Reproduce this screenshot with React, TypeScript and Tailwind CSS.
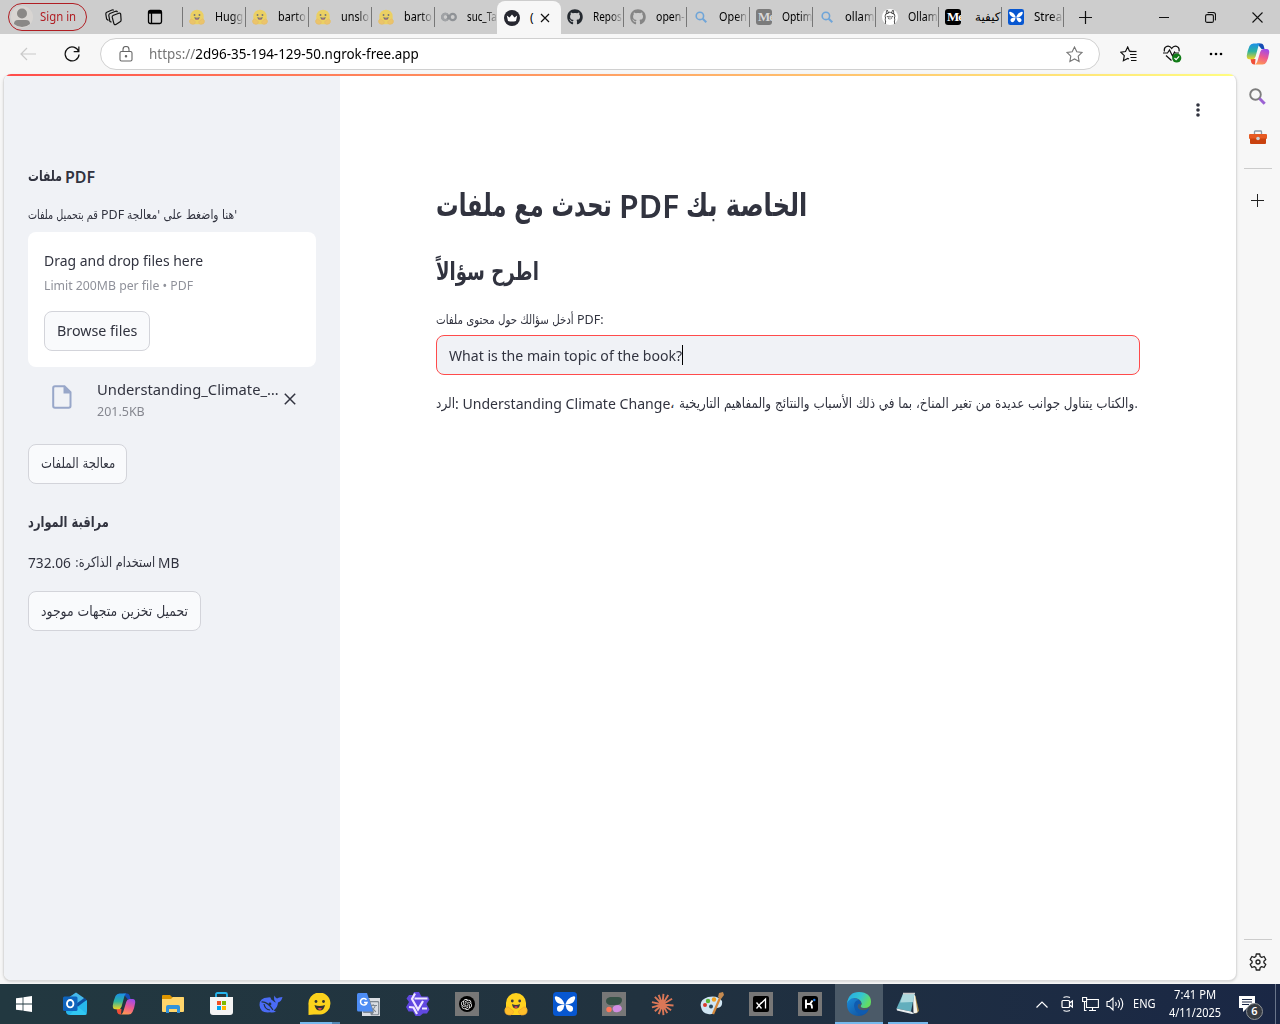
import { useLayoutEffect, useRef, type ReactNode } from "react";
import { FaGithub } from "react-icons/fa";
import { SiOllama, SiOpenai } from "react-icons/si";
import { MdGTranslate } from "react-icons/md";

/* Stretches its text horizontally so that it fills the width set by its class. */
function Fit({ className, children }: { className: string; children: ReactNode }) {
  const outer = useRef<HTMLSpanElement>(null);
  const inner = useRef<HTMLSpanElement>(null);
  useLayoutEffect(() => {
    const apply = () => {
      if (!outer.current || !inner.current) return;
      const natural = inner.current.offsetWidth;
      if (natural) inner.current.style.transform = `scaleX(${outer.current.clientWidth / natural})`;
    };
    apply();
    document.fonts?.ready.then(apply);
  }, []);
  return (
    <span ref={outer} className={`block shrink-0 whitespace-nowrap ${className}`}>
      <span ref={inner} className="inline-block origin-left">{children}</span>
    </span>
  );
}

function Hug({ size = 16 }: { size?: number }) {
  return (
    <svg width={size} height={size} viewBox="0 0 24 24">
      <path d="M12 1a10 10 0 0 1 10 10v4q2 2 1 4.500-1 2-4 3.500H5q-3-1.500-4-3.500Q0 17 2 15v-4A10 10 0 0 1 12 1z" fill="#ffd21e" />
      <path d="M2.500 15.500q1.500-1.500 3 .5l4 3q.5 3-3 4-5 0-5.500-3-.5-2.500 1.500-4.500zM21.500 15.500q-1.500-1.500-3 .5l-4 3q-.5 3 3 4 5 0 5.500-3 .5-2.500-1.500-4.500z" fill="#ffbf2a" stroke="#f0a52c" strokeWidth=".7" />
      <circle cx="8.300" cy="9" r="1.400" fill="#3a3b45" />
      <circle cx="15.700" cy="9" r="1.400" fill="#3a3b45" />
      <path d="M8 12q4 2.200 8 0q-.5 4.500-4 4.500T8 12z" fill="#3a3b45" />
      <path d="M10 15q2-1.500 4 0q-2 2-4 0z" fill="#f5414f" />
    </svg>
  );
}

function Colab() {
  return (
    <svg width="16" height="16" viewBox="0 0 16 16" fill="none" strokeWidth="2.300">
      <circle cx="4.300" cy="8" r="3.100" stroke="#8f9296" />
      <circle cx="11.700" cy="8" r="3.100" stroke="#8f9296" />
      <path d="M6.500 5.800A3.100 3.100 0 1 0 6.500 10.200" stroke="#a1a3a6" />
    </svg>
  );
}

function Crown() {
  return (
    <svg width="16" height="16" viewBox="0 0 16 16">
      <circle cx="8" cy="8" r="8" fill="#262730" />
      <path d="M2.800 5.500l2.700 2L8 4.400l2.500 3.100 2.700-2-1.200 5.600q-4 1-8 0z" fill="#fff" />
    </svg>
  );
}

function BlueSearch() {
  return (
    <svg width="16" height="16" viewBox="0 0 16 16" fill="none" stroke="#6fa5d8" strokeWidth="1.600">
      <circle cx="6.900" cy="6.900" r="3.700" />
      <path d="M9.700 9.700l3.600 3.600" strokeWidth="2" />
    </svg>
  );
}

function Medium({ dim }: { dim?: boolean }) {
  return (
    <span className={`flex h-4 w-4 items-center overflow-hidden rounded-[3px] pl-[2px] font-['Liberation_Serif'] text-[13px] font-bold leading-4 tracking-[-1px] ${dim ? "bg-[#7b7b7b] text-[#d8d8d8]" : "bg-black text-white"}`}>
      Me
    </span>
  );
}

function Butterfly({ size = 16 }: { size?: number }) {
  return (
    <svg width={size} height={size} viewBox="0 0 24 24">
      <rect width="24" height="24" rx="3.500" fill="#0757d1" />
      <g fill="#fff">
        <path d="M11.700 12.500Q9.500 5.500 3.300 4.300 1.500 4.100 1.800 6q.7 4 4.200 5.600 2.500 1 5.700.9zM12.300 12.500Q14.500 5.500 20.700 4.300q1.800-.2 1.500 1.700-.7 4-4.200 5.600-2.500 1-5.700.9z" />
        <path d="M11.500 12.800q-4.500-.3-6.700 1.500-1.800 2-.6 4.200 1.900 2.200 4.300.6 2.400-1.800 3-6.300zM12.500 12.800q4.500-.3 6.700 1.500 1.800 2 .6 4.200-1.900 2.200-4.300.6-2.400-1.800-3-6.300z" />
      </g>
    </svg>
  );
}

function OllamaTab() {
  return (
    <span className="flex h-4 w-4 items-center justify-center rounded-full bg-white text-[#333]">
      <SiOllama size={14} />
    </span>
  );
}

function Copilot({ size = 24 }: { size?: number }) {
  return (
    <svg width={size} height={size} viewBox="0 0 24 24">
      <defs>
        <linearGradient id="cpA" x1="0" y1="0" x2="0" y2="1">
          <stop offset="0" stopColor="#1b8fe8" /><stop offset=".5" stopColor="#2db3a0" /><stop offset="1" stopColor="#f0d321" />
        </linearGradient>
        <linearGradient id="cpB" x1=".6" y1="0" x2=".3" y2="1">
          <stop offset="0" stopColor="#a14be8" /><stop offset=".5" stopColor="#ee5a90" /><stop offset="1" stopColor="#ff9850" />
        </linearGradient>
      </defs>
      <path d="M11 1.500h4q2 0 2.600 2L18.500 7h-3z" fill="#154db5" />
      <path d="M9 22.500h-1q-2 0-2.700-2L4.500 17h5z" fill="#ef4e38" />
      <path d="M7.500 1.500h6.800q-1.500 1-2 3L9.600 14.500q-.8 2.700-3.300 2.700H3.200Q.5 17 .8 13.500q.7-5 2.700-9.500 1.300-2.500 4-2.500z" fill="url(#cpA)" />
      <path d="M16.500 22.500H9q1.800-1 2.300-3l3-9.800Q15 7 17.500 7h3.300q2.700.2 2.400 3.700-.7 5-2.700 9.300-1.300 2.500-4 2.500z" fill="url(#cpB)" />
    </svg>
  );
}

const fade = "[mask-image:linear-gradient(to_right,black_60%,transparent_105%)]";

const tabs: { icon: ReactNode; label: string; width: string; active?: boolean; dim?: boolean }[] = [
  { icon: <Hug />, label: "Hugg", width: `w-7 ${fade}`, dim: true },
  { icon: <Hug />, label: "barto", width: `w-7 ${fade}`, dim: true },
  { icon: <Hug />, label: "unslo", width: `w-7 ${fade}`, dim: true },
  { icon: <Hug />, label: "barto", width: `w-7 ${fade}`, dim: true },
  { icon: <Colab />, label: "suc_Ta", width: `w-[30px] ${fade}` },
  { icon: <Crown />, label: "(", width: "w-1", active: true },
  { icon: <FaGithub size={16} color="#24292f" />, label: "Repos", width: `w-[29px] ${fade}` },
  { icon: <FaGithub size={16} color="#858585" />, label: "open-", width: `w-[29px] ${fade}` },
  { icon: <BlueSearch />, label: "Open", width: `w-7 ${fade}` },
  { icon: <Medium dim />, label: "Optim", width: `w-[30px] ${fade}` },
  { icon: <BlueSearch />, label: "ollam", width: `w-[29px] ${fade}` },
  { icon: <OllamaTab />, label: "Ollam", width: `w-[30px] ${fade}` },
  { icon: <Medium />, label: "كيفية", width: "ml-1 w-[25px]" },
  { icon: <Butterfly />, label: "Strea", width: `w-7 ${fade}` },
];

function TabStrip() {
  return (
    <div className="flex h-[34px] items-center bg-[#cdcdcd] text-[12px] text-black">
      <div className="ml-2 flex h-7 w-[79px] items-center rounded-full border border-[#b01e23] pl-[2px]">
        <svg width="22" height="22" viewBox="0 0 22 22">
          <circle cx="11" cy="11" r="11" fill="#d8d5d2" />
          <circle cx="11" cy="7.500" r="5" fill="#8a8886" />
          <path d="M3 18q0-4 4-4h8q4 0 4 4-3.500 3-8 3t-8-3z" fill="#8a8886" />
        </svg>
        <Fit className="ml-[7px] w-9 text-[#b01e23]">Sign in</Fit>
      </div>
      <svg className="ml-[18px]" width="17" height="17" viewBox="0 0 17 17" fill="none" stroke="#111" strokeWidth="1.200" strokeLinejoin="round">
        <path d="M8.500 6.200l5.300-2q1.700-.4 1.900 1.100l.4 5.700q0 1.300-1 1.800l-4.200 2.700q-1.600.7-2-.8L7.200 8.200q-.2-1.400 1.300-2z" />
        <path d="M6.500 13.200l-1.600-.8L3.800 6.500q0-1.500 1.200-2l5.500-2.200q1.500-.4 2 .9M3.500 11.500L1.600 10 .8 5q0-1.400 1-1.800L7 1q1.200-.3 1.700.3" />
      </svg>
      <svg className="ml-[25px]" width="16" height="16" viewBox="0 0 16 16" fill="none" stroke="#000" strokeWidth="1.300">
        <rect x="1.500" y="1.500" width="13" height="13" rx="1.800" />
        <path d="M1.500 3.200h13" strokeWidth="3" />
        <path d="M4.500 4v10" />
      </svg>
      <div className="ml-[19px] flex h-full items-center">
        {tabs.map((t, i) =>
          t.active ? (
            <div key={i} className="mt-[1px] flex h-[33px] w-[64px] items-center rounded-t-lg bg-[#f7f7f7] pl-[7px]">
              {t.icon}
              <Fit className="ml-[10px] w-1">{t.label}</Fit>
              <svg className="ml-[6px]" width="10" height="10" viewBox="0 0 10 10" stroke="#111" strokeWidth="1.200"><path d="M1 1l8 8M9 1L1 9" /></svg>
            </div>
          ) : (
            <div key={i} className={`flex h-[20px] items-center pl-[6px] ${i === 6 ? "w-[62px]" : "w-[63px] border-l border-[#777]"} ${i === 13 ? "border-r" : ""}`}>
              <span className={`shrink-0 ${t.dim ? "opacity-60" : ""}`}>{t.icon}</span>
              <span className="ml-[10px]"><Fit className={t.width}>{t.label}</Fit></span>
            </div>
          ),
        )}
      </div>
      <svg className="ml-[14px]" width="15" height="15" viewBox="0 0 15 15" stroke="#111" strokeWidth="1.200"><path d="M7.500 1v13M1 7.500h13" /></svg>
      <div className="ml-auto flex items-center pr-[17px]">
        <svg width="10" height="10" viewBox="0 0 10 10" stroke="#111"><path d="M0 5.500h10" /></svg>
        <svg className="ml-[36px]" width="11" height="11" viewBox="0 0 11 11" fill="none" stroke="#111" strokeWidth="1.100">
          <rect x=".6" y="2.600" width="7.800" height="7.800" rx="1.500" />
          <path d="M2.700 1q.3-.5 1-.5h4.500q2.300 0 2.300 2.300v4.500q0 .7-.6 1" />
        </svg>
        <svg className="ml-[36px]" width="11" height="11" viewBox="0 0 11 11" stroke="#111" strokeWidth="1.100"><path d="M.5.500l10 10M10.500.500l-10 10" /></svg>
      </div>
    </div>
  );
}

const star = "M8.500 1l2.300 4.800 5.200.7-3.800 3.700.9 5.300-4.600-2.500-4.600 2.500.9-5.300L1 6.500l5.200-.7z";

function Toolbar() {
  return (
    <div className="flex h-10 items-center bg-[#f7f7f7]">
      <svg className="ml-5" width="16" height="14" viewBox="0 0 16 14" fill="none" stroke="#c9c9c9" strokeWidth="1.200"><path d="M16 7H1M7 1L1 7l6 6" /></svg>
      <svg className="ml-7 mt-[-1px]" width="16" height="17" viewBox="0 0 17 17" fill="none" stroke="#111" strokeWidth="1.300"><path d="M15.600 6.500a7.400 7.400 0 1 0 .4 3M15.800 1v5.500h-5.500" /></svg>
      <div className="ml-5 flex h-8 w-[1000px] items-center rounded-full border border-[#d0d0d0] bg-white px-[18px] text-[13.500px]">
        <svg width="14" height="16" viewBox="0 0 14 16" fill="none" stroke="#666" strokeWidth="1.100">
          <rect x="1" y="5.500" width="12" height="9.500" rx="1.500" />
          <path d="M4 5.500V3.500a3 3 0 0 1 6 0v2" />
          <circle cx="7" cy="10.300" r=".7" fill="#666" />
        </svg>
        <Fit className="ml-4 w-[270px] text-black"><span className="text-[#767676]">https://</span>2d96-35-194-129-50.ngrok-free.app</Fit>
        <svg className="ml-auto mr-[-2px]" width="17" height="17" viewBox="0 0 17 17" fill="none" stroke="#777" strokeWidth="1.100"><path d={star} /></svg>
      </div>
      <svg className="ml-5" width="17" height="16" viewBox="0 0 17 16" fill="none" stroke="#111" strokeWidth="1.200">
        <path d="M12 5.500L9.500 5.200 7.700 1 5.500 5.500.8 6.200l3.500 3.500-.9 5 4.300-2.300 1.300.6M10 8.500h6.500M10.500 11.500h6M11 14.500h5.500" />
        <path d="M10 5.500h6.500" />
      </svg>
      <svg className="ml-[26px]" width="19" height="18" viewBox="0 0 19 18" fill="none" stroke="#111" strokeWidth="1.200">
        <path d="M1.500 6.500Q.5 2.500 4 1.300 6.800.5 8.700 3.500 10.600.5 13.500 1.300q3.300 1.200 2.500 5M0 8h4.500l2-3 3 6 2-4 .8 1H16M3 10.500l5.500 5" />
        <circle cx="13.700" cy="13" r="4.600" fill="#117b17" stroke="none" />
        <path d="M11.500 13l1.600 1.600 3-3.200" stroke="#fff" />
      </svg>
      <svg className="ml-[27px]" width="14" height="4" viewBox="0 0 14 4"><circle cx="2" cy="2" r="1.300" /><circle cx="7" cy="2" r="1.300" /><circle cx="12" cy="2" r="1.300" /></svg>
      <span className="ml-[23px]"><Copilot /></span>
    </div>
  );
}

const ar = "font-['DejaVu_Sans']";

function Sidebar() {
  return (
    <aside className="w-[336px] shrink-0 bg-[#f0f2f6] px-6 pt-[91px] text-[15px] text-[#31333f]">
      <div className="flex h-6 items-center font-semibold">
        <Fit className={`-mt-[2px] w-[34px] text-[15px] font-bold ${ar}`}>ملفات</Fit>
        <Fit className="ml-[3px] w-[30px] text-[16px]">PDF</Fit>
      </div>
      <div className="mt-4 flex h-5 items-center text-[13px]">
        <Fit className={`w-[70px] text-[12.500px] ${ar}`}>قم بتحميل ملفات</Fit>
        <Fit className="ml-[3px] w-[23px]">PDF</Fit>
        <Fit className={`ml-[3px] w-[110px] text-[12.500px] ${ar}`}>هنا واضغط على 'معالجة'</Fit>
      </div>
      <div className="mt-[7px] h-[135px] w-[288px] rounded-lg bg-white px-4 pt-4">
        <Fit className="h-6 w-[159px] leading-6">Drag and drop files here</Fit>
        <Fit className="mt-[3px] h-5 w-[149px] text-[13px] leading-5 text-[#8f919a]">Limit 200MB per file • PDF</Fit>
        <button className="mt-4 flex h-10 w-[106px] items-center rounded-lg border border-[#d3d4da] bg-[#f9fafc] pl-3">
          <Fit className="-mt-[2px] w-20">Browse files</Fit>
        </button>
      </div>
      <div className="flex h-[77px] pl-6">
        <svg className="mt-[18px]" width="20" height="24" viewBox="0 0 20 24">
          <path d="M3 1.200h9.500l6 6V21q0 1.800-1.800 1.800H3Q1.200 22.800 1.200 21V3Q1.200 1.200 3 1.200z" fill="none" stroke="#98a7c9" strokeWidth="2" />
          <path d="M11.500 1v7.500H19z" fill="#98a7c9" />
        </svg>
        <div className="ml-[25px] pt-[10px]">
          <Fit className="h-6 w-[182px] leading-6">Understanding_Climate_…</Fit>
          <Fit className="h-5 w-[48px] text-[13px] leading-5 text-[#85878f]">201.5KB</Fit>
        </div>
        <svg className="ml-[5px] mt-[26px]" width="12" height="12" viewBox="0 0 12 12" stroke="#31333f" strokeWidth="1.500"><path d="M.8.800l10.400 10.400M11.200.800L.8 11.200" /></svg>
      </div>
      <button className="flex h-10 w-[99px] items-center rounded-lg border border-[#d3d4da] bg-[#f9fafc] pl-3">
        <Fit className={`-mt-[2px] w-[74px] text-[14px] ${ar}`}>معالجة الملفات</Fit>
      </button>
      <div className="mt-[26px] flex h-6 items-center">
        <Fit className={`w-[81px] text-[15px] font-bold ${ar}`}>مراقبة الموارد</Fit>
      </div>
      <div className="mt-[17px] flex h-6 items-center">
        <Fit className="-mt-[2px] w-[43px]">732.06</Fit>
        <Fit className={`-mt-[2px] ml-[4px] w-[80px] text-[14px] ${ar}`}><span dir="rtl">استخدام الذاكرة:</span></Fit>
        <Fit className="-mt-[2px] ml-[3px] w-[21px]">MB</Fit>
      </div>
      <button className="mt-4 flex h-10 w-[173px] items-center rounded-lg border border-[#d3d4da] bg-[#f9fafc] pl-3">
        <Fit className={`w-[147px] text-[14px] ${ar}`}>تحميل تخزين متجهات موجود</Fit>
      </button>
    </aside>
  );
}

function Main() {
  return (
    <main className="flex-1 pl-24 text-[15px] text-[#31333f]">
      <div className="flex h-[72px] items-center justify-end pr-[36px]">
        <svg width="4" height="14" viewBox="0 0 4 14" fill="#31333f"><circle cx="2" cy="2" r="1.800" /><circle cx="2" cy="7" r="1.800" /><circle cx="2" cy="12" r="1.800" /></svg>
      </div>
      <h1 className="mt-10 flex h-[42px] items-center font-bold">
        <Fit className={`-mt-1 w-[176px] text-[32px] ${ar}`}>تحدث مع ملفات</Fit>
        <Fit className="-mt-[2px] ml-[7px] w-[60px] text-[33px] font-semibold">PDF</Fit>
        <Fit className={`-mt-1 ml-[7px] w-[121px] text-[32px] ${ar}`}>الخاصة بك</Fit>
      </h1>
      <h2 className="mt-7 flex h-8 items-center font-bold">
        <Fit className={`w-[103px] text-[25px] ${ar}`}>اطرح سؤالاً</Fit>
      </h2>
      <div className="mt-[22px] flex h-5 items-center text-[13px]">
        <Fit className={`w-[138px] text-[12.500px] ${ar}`}>أدخل سؤالك حول محتوى ملفات</Fit>
        <Fit className="ml-[3px] w-[27px]">PDF:</Fit>
      </div>
      <div className="mt-[5px] flex h-10 w-[704px] items-center rounded-lg border border-[#ff4b4b] bg-[#f0f2f6] pl-3">
        <Fit className="w-[233px]">What is the main topic of the book?</Fit>
        <span className="h-5 w-px bg-black" />
      </div>
      <div className="mt-4 flex h-6 items-center">
        <Fit className={`w-[19px] text-[14px] ${ar}`}>الرد</Fit>
        <Fit className="w-[215px]">: Understanding Climate Change</Fit>
        <Fit className={`w-[5px] text-[14px] ${ar}`}>،</Fit>
        <Fit className={`ml-[4px] w-[459px] text-[14px] ${ar}`}>والكتاب يتناول جوانب عديدة من تغير المناخ، بما في ذلك الأسباب والنتائج والمفاهيم التاريخية.</Fit>
      </div>
    </main>
  );
}

function EdgeRail() {
  return (
    <div className="flex w-[43px] shrink-0 flex-col items-center pr-[2px]">
      <svg className="mt-[14px]" width="17" height="17" viewBox="0 0 17 17" fill="none">
        <circle cx="6.500" cy="6.500" r="5.300" stroke="#7d7d7d" strokeWidth="1.900" />
        <path d="M10.500 10.500l5.200 5.200" stroke="#9b62d3" strokeWidth="3" />
      </svg>
      <svg className="mt-[25px]" width="18" height="15" viewBox="0 0 18 15">
        <path d="M5.500 4V1.800q0-.8.800-.8h5.400q.8 0 .8.800V4" fill="none" stroke="#8b9aa5" strokeWidth="1.300" />
        <rect x="0" y="4" width="18" height="5" rx="1" fill="#e65a22" />
        <path d="M1 8.500h16V13q0 1-1 1H2q-1 0-1-1z" fill="#c9420f" />
        <circle cx="9" cy="8.500" r="1.800" fill="#c8d3da" />
      </svg>
      <div className="mt-[23px] h-px w-7 bg-[#ccc]" />
      <svg className="mt-[25px]" width="13" height="13" viewBox="0 0 13 13" stroke="#222"><path d="M6.500 0v13M0 6.500h13" /></svg>
      <div className="mt-auto h-px w-7 bg-[#ccc]" />
      <svg className="mb-[13px] mt-[13px]" width="18" height="18" viewBox="0 0 18 18" fill="none" stroke="#222" strokeWidth="1.300" strokeLinejoin="round">
        <path d="M7.300 1h3.400l.5 2.500 1.500.9 2.400-.9 1.700 3L14.900 8.200v1.600l1.900 1.700-1.700 3-2.400-.9-1.500.9-.5 2.500H7.300l-.5-2.500-1.500-.9-2.400.9-1.700-3 1.900-1.700V8.200L1.200 6.500l1.700-3 2.400.9 1.500-.9z" />
        <circle cx="9" cy="9" r="2" />
      </svg>
    </div>
  );
}

const Gray = ({ children }: { children: ReactNode }) => <span className="flex h-6 w-6 items-center justify-center bg-[#777]">{children}</span>;

const apps: { icon: ReactNode; state?: string }[] = [
  { icon: (
    <svg width="24" height="24" viewBox="0 0 24 24">
      <path d="M3 7L13 1l10 7v10q0 4-4 4H7q-4 0-4-4z" fill="#1270c9" />
      <path d="M5 6l8-5.500L21 6l-8 6z" fill="#46b8ea" /><path d="M12 14l12-6v11q0 4-3 4H7q-4 0-4-4z" fill="#27b7ed" /><path d="M13 12l9-6 1.500 2L13 16z" fill="#0e4f9f" /><path d="M14 14l10 8q-1 1-3 1H7z" fill="#31c8f3" />
      <rect x="0" y="4.500" width="14.500" height="14.500" rx="1.500" fill="#0f64bd" /><ellipse cx="7.200" cy="11.700" rx="3.200" ry="3.700" fill="none" stroke="#fff" strokeWidth="1.900" />
    </svg>) },
  { icon: <Copilot /> },
  { icon: (
    <svg width="22" height="20" viewBox="0 0 22 20">
      <path d="M0 2q0-1 1-1h7l2 2h11q1 0 1 1v3H0z" fill="#dd9500" /><path d="M0 5h9l2-2h10q1 0 1 1v13q0 1-1 1H1q-1 0-1-1z" fill="#ffd56b" />
      <path d="M4 19v-6q0-2 2-2h10q2 0 2 2v6h-3v-4H7v4z" fill="#3293db" />
    </svg>) },
  { icon: (
    <svg width="23" height="24" viewBox="0 0 23 24">
      <path d="M6 5V2.500Q6 1 7.500 1h8Q17 1 17 2.500V5" fill="none" stroke="#25b5ee" strokeWidth="1.800" /><path d="M0 5h23v15q0 3-3 3H3q-3 0-3-3z" fill="#f4f4f4" />
      <path d="M7 9h4v4H7z" fill="#f25022" /><path d="M12 9h4v4h-4z" fill="#7fba00" /><path d="M7 14h4v4H7z" fill="#00a4ef" /><path d="M12 14h4v4h-4z" fill="#ffb900" />
    </svg>) },
  { icon: (
    <svg width="24" height="20" viewBox="0 0 24 20">
      <path d="M.5 11Q.5 3.500 9 3.500q2-.5 3 .5-1 1 1 2 3 2.500 4 2.500-3-3-1.500-7 .5 2 2.500 3 1.500-1.500 5.500-1.500-1 4.500-4.500 5.500-.5 5.500-4.500 8l2.500 1q-2.500 1.500-6 .8Q1 19.500.5 11z" fill="#4a6bf5" />
      <path d="M2.500 8q6-.5 11.500 8M5 10q1 5.500 6 6" fill="none" stroke="#22343f" strokeWidth="1.200" />
      <circle cx="11" cy="10" r="1.400" fill="#22343f" />
    </svg>) },
  { icon: (
    <svg width="23" height="23" viewBox="0 0 23 23">
      <path d="M.5 22V12A11 11 0 1 1 12 21.500H6z" fill="#fcd21c" /><circle cx="8" cy="8.500" r="1.400" fill="#333" /><circle cx="15.500" cy="8.500" r="1.400" fill="#333" />
      <path d="M6.500 12q5 2 10.500 0-1 5.500-5.200 5.500T6.500 12z" fill="#333" /><path d="M9.500 15.500q2.300-1.200 4.600 0-2 2.500-4.600 0z" fill="#f5505c" />
    </svg>), state: "split" },
  { icon: (
    <span className="relative flex h-[23px] w-[23px]">
      <MdGTranslate className="absolute right-0 bottom-0 bg-[#d9dde2] text-[#7d8790]" size={18} />
      <svg className="relative" width="23" height="23" viewBox="0 0 23 23"><path d="M1.500 0H10l6 18.500H1.500Q0 18.500 0 17V1.500Q0 0 1.500 0z" fill="#4d8df5" /><path d="M9.500 6.800A3.300 3.300 0 1 0 10 9.500H7" fill="none" stroke="#fff" strokeWidth="1.500" /></svg>
    </span>) },
  { icon: (
    <svg width="24" height="24" viewBox="0 0 24 24">
      <path d="M8 0h5l2.500 4.500H22l1.500 3-3 4.500 3 5.500-2.500 4h-4L14 24H9.500L7 19.500H2.500L0 15l3-5L.5 6.500 3 3h4z" fill="#6048e0" />
      <path d="M8.500 6.500h13M3 15l4.500.5L11 22M9 1.500L6 7l6 10.500L17 9" fill="none" stroke="#efe8ff" strokeWidth="2.200" />
      <path d="M16 16.500h5" stroke="#efe8ff" strokeWidth="2" />
    </svg>) },
  { icon: <Gray><span className="flex h-4 w-4 items-center justify-center rounded-full bg-black text-white"><SiOpenai size={11} /></span></Gray> },
  { icon: <Hug size={24} /> },
  { icon: <Butterfly size={24} /> },
  { icon: (
    <Gray><svg width="16" height="17" viewBox="0 0 16 17"><path d="M4 1h8q4 0 4 3 0 5-7 5H4Q0 8 0 5t4-4z" fill="#355146" /><circle cx="3" cy="13.500" r="2.700" fill="#ff7759" /><ellipse cx="11.300" cy="12.700" rx="4.600" ry="3.500" fill="#d18ee2" transform="rotate(-15 11 13)" /></svg></Gray>) },
  { icon: (
    <svg width="23" height="23" viewBox="0 0 24 24" stroke="#d97757" strokeWidth="2">
      <path d="M12 12L13 1M12 12l6-10M12 12l10-6M12 12l11.500 1M12 12l9 6M12 12l5 9M12 12l1 11M12 12L8 22M12 12l-8 7M12 12L1 15M12 12L1 9.500M12 12L4 4M12 12L8 2" />
    </svg>) },
  { icon: (
    <svg width="24" height="24" viewBox="0 0 24 24">
      <path d="M1 15Q-1 8 8 5q10-2 14 4 1 7-5 7-3 0-3 4-1 3-6 2-6-1-7-7z" fill="#cfe5f3" /><circle cx="5" cy="13" r="2" fill="#d83a2e" /><circle cx="8" cy="9" r="2.200" fill="#59b636" /><circle cx="14" cy="7.500" r="2.200" fill="#f0a020" /><circle cx="11" cy="14.500" r="2" fill="#28465a" />
      <path d="M13 22l7-16" stroke="#d5883b" strokeWidth="2.300" /><path d="M18 5l1-4 4-1 1 3-3 4z" fill="#c48a50" />
    </svg>) },
  { icon: (
    <Gray><svg width="16" height="16" viewBox="0 0 16 16"><rect width="16" height="16" rx="2" fill="#000" /><path d="M3.500 6.500l5 6M8.500 6.500l-5 6M8 7.500l4.500-4.500v9.500" fill="none" stroke="#fff" strokeWidth="1.300" /></svg></Gray>) },
  { icon: (
    <Gray><svg width="16" height="16" viewBox="0 0 16 16"><rect width="16" height="16" rx="3" fill="#000" /><path d="M4 3.500v9M4 8h4l2.500-3.500M8 8q2 0 2 4.500" fill="none" stroke="#fff" strokeWidth="1.900" /><circle cx="12.300" cy="4" r="1.200" fill="#2080f0" /></svg></Gray>) },
  { icon: (
    <svg width="24" height="24" viewBox="0 0 24 24">
      <defs>
        <linearGradient id="eg" x1="0" y1="0" x2="1" y2=".4"><stop offset="0" stopColor="#25a9e8" /><stop offset=".6" stopColor="#35c6cf" /><stop offset="1" stopColor="#63dd62" /></linearGradient>
        <linearGradient id="eb" x1="0" y1="0" x2="1" y2="1"><stop offset="0" stopColor="#1a8ad8" /><stop offset="1" stopColor="#114a96" /></linearGradient>
      </defs>
      <path d="M0 12Q0 6 6 6q7 0 8 6-3-1-3.500 2 0 4 6 4.500 3 0 5.500-2-3 7.500-10 7.500Q0 23.500 0 12z" fill="url(#eb)" />
      <path d="M0 11.500Q1.500 0 12 0q12 .5 12 10 0 6-7 6-4-.5-3-2.500 1.500-2 0-4Q12 6 7 6q-5 .5-7 5.500z" fill="url(#eg)" />
      <path d="M7 14Q7 9 11.500 8 14 9 14 12q-3-1-3.500 2 0 4 6 4.500 3 0 5.500-2-2 5-6 6-8-.5-9-8.500z" fill="#0f5bb0" />
    </svg>), state: "active" },
  { icon: (
    <svg width="24" height="24" viewBox="0 0 24 24">
      <path d="M18 3l1.500 1L23 19l-3.500 3z" fill="#a98b4a" /><path d="M17 3h2l2.500 17.500-4 1z" fill="#f2f3ec" /><path d="M7 2h11.500L15 19.500.5 16.500z" fill="#63aebd" /><path d="M7 2h11.500l-1.700 8-12.600.5z" fill="#acd8de" /><path d="M.5 16.500L15 19.500l3 2-2 .5L1 18.500z" fill="#e8eef0" /><path d="M7 1.500h12" stroke="#ccc" strokeWidth="1.500" />
    </svg>), state: "open" },
];

function Taskbar() {
  return (
    <div className="flex h-10 items-center bg-linear-to-r from-[#223840] via-[#21323f] to-[#1a2745] text-white">
      <div className="flex w-[50px] justify-center pr-[2px]">
        <svg width="16" height="16" viewBox="0 0 16 16" fill="#fff"><path d="M0 2.300l6.600-.9v6.200H0zM7.400 1.300L16 0v7.600H7.400zM0 8.400h6.600v6.200L0 13.700zM7.400 8.400H16V16l-8.600-1.300z" /></svg>
      </div>
      {apps.map((a, i) => (
        <div key={i} className={`relative flex h-10 items-center justify-center ${a.state === "active" ? "ml-px w-12 bg-[#4b5a68]" : "w-[49px]"}`}>
          {a.icon}
          {a.state && (
            <span className={`absolute bottom-0 flex h-[2px] justify-end bg-[#76b9ed] ${a.state === "active" ? "inset-x-0" : "left-[5px] w-10"}`}>
              {a.state === "split" && <span className="h-full w-2 bg-[#5187b3]" />}
            </span>
          )}
        </div>
      ))}
      <div className="ml-auto flex h-full items-center text-[12px]">
        <svg width="12" height="7" viewBox="0 0 12 7" fill="none" stroke="#fff" strokeWidth="1.200"><path d="M.5 6.500L6 1l5.500 5.500" /></svg>
        <svg className="ml-[13px]" width="12" height="16" viewBox="0 0 12 16" fill="none" stroke="#fff" strokeWidth="1.200"><rect x="1" y="4.500" width="7.500" height="7" rx="1" /><path d="M8.500 7L11.400 5v6L8.500 9M2.500 1.500q3-1.500 6.500 0M2.500 14.500q3 1.500 6.500 0" /></svg>
        <svg className="ml-[9px]" width="17" height="16" viewBox="0 0 17 16" fill="none" stroke="#fff" strokeWidth="1.100"><path d="M4.500 3.500h11.900v8H4.500V6M10.500 11.500v3M7 14.500h7" /><path d="M.6 1.500h4v4h-4zM2.500 5.500v9h2" /></svg>
        <svg className="ml-[7px]" width="18" height="16" viewBox="0 0 18 16" fill="none" stroke="#fff" strokeWidth="1.100"><path d="M1 5.500h2.500L7 2v12l-3.500-3.500H1zM9.500 6q1.500 2 0 4M12 4q3 4 0 8M14.500 2q4.500 6 0 12" /></svg>
        <Fit className="ml-[9px] w-[23px]">ENG</Fit>
        <div className="ml-[13px] w-[53px] text-[12px] leading-[18px]">
          <Fit className="ml-[5px] w-[42px]">7:41 PM</Fit>
          <Fit className="w-[52px]">4/11/2025</Fit>
        </div>
        <div className="relative ml-[17px] h-4 w-4">
          <svg width="16" height="16" viewBox="0 0 16 16"><path d="M0 0h16v12H8l-4 4v-4H0z" fill="#fff" /><path d="M3 3.500h10M3 6h10M3 8.500h7" stroke="#1a2745" /></svg>
          <span className="absolute left-[7px] top-[7px] flex h-[17px] w-[17px] items-center justify-center rounded-full border border-[#909498] bg-[#363b42] text-[11px] font-semibold">6</span>
        </div>
        <span className="ml-5 mr-1 h-full w-px bg-[#69758a]" />
      </div>
    </div>
  );
}

export default function App() {
  return (
    <div className="flex h-[1024px] w-[1280px] flex-col overflow-hidden bg-[#f7f7f7] font-['Noto_Sans','DejaVu_Sans',sans-serif]">
      <TabStrip />
      <Toolbar />
      <div className="flex h-[910px]">
        <div className="ml-[3px] flex h-[907px] w-[1234px] flex-col overflow-hidden rounded-lg border border-t-0 border-[#dcdcdc] bg-white shadow-sm">
          <div className="h-[2px] shrink-0 bg-linear-to-r from-[#ff4b4b] via-[#ffa364] to-[#fffd80]" />
          <div className="-mt-[2px] flex flex-1 [clip-path:inset(2px_0_0_0)]">
            <Sidebar />
            <Main />
          </div>
        </div>
        <EdgeRail />
      </div>
      <Taskbar />
    </div>
  );
}
